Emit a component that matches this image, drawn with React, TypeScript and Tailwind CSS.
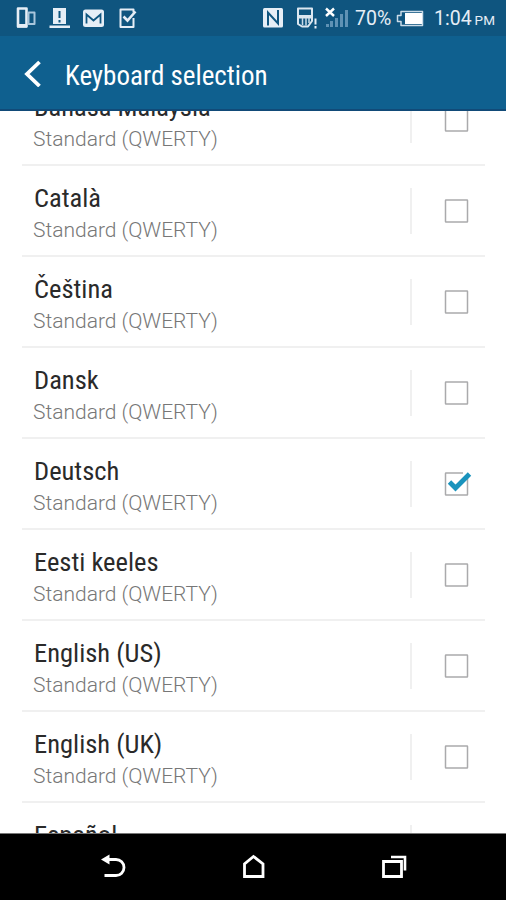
import type React from "react"

interface Language {
  name: string
  checked?: boolean
}

const languages: Language[] = [
  { name: "Bahasa Malaysia" },
  { name: "Català" },
  { name: "Čeština" },
  { name: "Dansk" },
  { name: "Deutsch", checked: true },
  { name: "Eesti keeles" },
  { name: "English (US)" },
  { name: "English (UK)" },
  { name: "Español" },
]

function StatusBar(): React.JSX.Element {
  return (
    <div className="flex h-9 shrink-0 items-center bg-[#0f557f] text-[#e6eef6]">
      <svg width="150" height="36" viewBox="0 0 150 36" fill="none">
        <path d="M18 8.500h8.500v18h-8.500z" stroke="#e6eef6" strokeWidth="2.600" strokeLinejoin="round" />
        <path d="M17 24h10v3.500h-10z" fill="#e6eef6" />
        <path d="M28.500 12.500h6v11.500h-6z" stroke="#a9c6dc" strokeWidth="2" strokeLinejoin="round" />
        <path d="M53 8h13v16H53zM49.500 25.500h20.500v2.500H49.500z" fill="#e6eef6" />
        <path d="M59.500 11v7M59.500 20v2.500" stroke="#0f557f" strokeWidth="2" />
        <rect x="83" y="9.500" width="21" height="17.500" rx="2.500" fill="#e6eef6" />
        <path d="M86.500 23.500v-9l7 6 7-6v9" stroke="#0f557f" strokeWidth="1.800" />
        <path d="M133.500 18v9h-13V9.500h13v3" stroke="#e6eef6" strokeWidth="2" strokeLinejoin="round" />
        <path d="M123.500 16.500l4 4 8-9" stroke="#e6eef6" strokeWidth="2.600" />
      </svg>
      <svg className="ml-[110px]" width="92" height="36" viewBox="260 0 92 36" fill="none">
        <rect x="263" y="8" width="20" height="19.500" rx="1.500" fill="#e6eef6" />
        <path d="M268 25.500V12.500l10 11V10" stroke="#0f557f" strokeWidth="2" />
        <path d="M298 8.500h14v12.500l-4 5.500h-6l-4-2.500z" stroke="#dbe7f0" strokeWidth="2" strokeLinejoin="round" />
        <path d="M298 15h14v3.500h-14z" fill="#dbe7f0" />
        <path d="M302.500 18v7M306 18v7.500M309 18v5" stroke="#c9dbe8" strokeWidth="1.500" />
        <path d="M315.500 18.500v6M315.500 26v2.500" stroke="#e6eef6" strokeWidth="2" />
        <path d="M326 8.500l8 7.500M334 8.500l-8 7.500" stroke="#fff" strokeWidth="2.400" />
        <path d="M327.500 24v3M331.500 21v6M336.500 18v9M341.500 14v13M346.500 10v17" stroke="#5f92b4" strokeWidth="3" />
      </svg>
      <span className="ml-[3px] w-[41px] pt-0.5 text-[19.500px] leading-9 whitespace-nowrap">70%</span>
      <svg width="28" height="36" viewBox="395 0 28 36" fill="none">
        <path d="M400 11.500h21.500v14H400v-4h-3.500v-6h3.500z" stroke="#c9dbe8" strokeWidth="1.500" strokeLinejoin="round" />
        <path d="M404 13h17v11h-17z" fill="#fff" />
      </svg>
      <span className="ml-2.5 pt-0.5 text-[19.500px] leading-9 whitespace-nowrap">1:04</span>
      <span className="ml-[3px] pt-1 text-[13.500px] leading-8">PM</span>
    </div>
  )
}

function Header(): React.JSX.Element {
  return (
    <header className="flex h-[75px] shrink-0 items-center border-b-2 border-[#114a78] bg-[#0f608f] pl-6 text-white">
      <svg width="18" height="28" viewBox="0 0 18 28" fill="none">
        <path d="M15.500 3L3 15l12.500 12" stroke="#fff" strokeWidth="3.800" />
      </svg>
      <h1 className="ml-[23px] pt-1.5 text-[27px] leading-8 font-normal [font-family:'Roboto_Condensed',Roboto,sans-serif] [font-stretch:75%]">
        Keyboard selection
      </h1>
    </header>
  )
}

function Checkbox({ checked }: { checked?: boolean }): React.JSX.Element {
  return (
    <svg width="30" height="30" viewBox="0 0 30 30" fill="none">
      <rect x="2.500" y="4" width="22" height="22" rx="0.500" stroke="#aaaaac" strokeWidth="1.500" />
      {checked && (
        <>
          <path d="M20 1h6v8h-6z" fill="#fff" />
          <path d="M6.500 13l6 6L26.500 5" stroke="#1993bd" strokeWidth="4.800" />
        </>
      )}
    </svg>
  )
}

function LanguageRow({ name, checked }: Language): React.JSX.Element {
  return (
    <li className="flex h-[91px] shrink-0 items-center border-b-2 border-[#f0f0f0]">
      <div className="flex-1 pt-[7px] pl-[11px]">
        <div className="pl-px text-[26.500px] leading-8 font-normal text-[#2a2a2a] [font-family:'Roboto_Condensed',Roboto,sans-serif] [font-stretch:75%]">
          {name}
        </div>
        <div className="text-[21px] leading-8 font-light text-[#777]">
          Standard (QWERTY)
        </div>
      </div>
      <div className="mr-[31px] h-[46px] w-0.5 bg-[#f0f0f0]" />
      <div className="mr-3">
        <Checkbox checked={checked} />
      </div>
    </li>
  )
}

function NavBar(): React.JSX.Element {
  return (
    <nav className="flex h-[67px] shrink-0 items-center border-t border-[#777] bg-black pl-[98px]">
      <svg width="30" height="30" viewBox="98 852 30 30" fill="none">
        <path d="M107 859.500h9a8 8 0 010 16H104.500" stroke="#fff" strokeWidth="2.800" />
        <path d="M101 859.500l8.500-5v10z" fill="#fff" />
      </svg>
      <svg className="ml-[110px]" width="30" height="30" viewBox="238 852 30 30" fill="none">
        <path d="M244.500 876.500v-12.500l9-7.500 9.500 7.500v12.500z" stroke="#fff" strokeWidth="2.800" />
      </svg>
      <svg className="ml-[112px]" width="30" height="30" viewBox="380 852 30 30" fill="none">
        <path d="M383.500 861.500h18v15h-18z" stroke="#fff" strokeWidth="2.800" />
        <path d="M391 857h14v13.500" stroke="#fff" strokeWidth="2.600" />
      </svg>
    </nav>
  )
}

export default function App(): React.JSX.Element {
  return (
    <div className="flex h-[900px] w-[506px] flex-col overflow-hidden bg-white [font-family:Roboto,sans-serif]">
      <StatusBar />
      <Header />
      <main className="min-h-0 flex-1 overflow-hidden px-[22px]">
        <ul className="-mt-9 flex w-[463px] flex-col">
          {languages.map((language) => (
            <LanguageRow key={language.name} {...language} />
          ))}
        </ul>
      </main>
      <NavBar />
    </div>
  )
}
